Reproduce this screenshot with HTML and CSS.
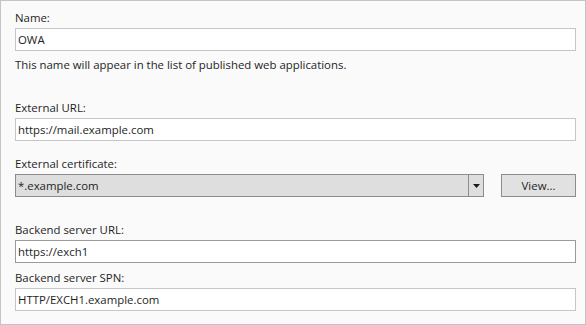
FILE: index.html
```html
<!DOCTYPE html>
<html lang="en">

<head>
  <meta charset="UTF-8" />
  <title>Publishing Settings</title>
  <link rel="stylesheet" href="styles.css">
</head>

<body>
  <div class="panel">
    <div class="field">
      <label class="label">Name:</label>
      <div class="box">OWA</div>
      <p class="hint">This name will appear in the list of published web applications.</p>
    </div>

    <div class="field url">
      <label class="label">External URL:</label>
      <div class="box">https://mail.example.com</div>
    </div>

    <div class="field cert">
      <label class="label">External certificate:</label>
      <div class="row">
        <div class="combo">
          <span class="combo-text">*.example.com</span>
          <span class="combo-arrow">
            <svg width="7" height="4" viewBox="0 0 7 4"><path d="M0 0h7L3.5 4z" fill="#1a1a1a"/></svg>
          </span>
        </div>
        <button class="btn">View...</button>
      </div>
    </div>

    <div class="field backend">
      <label class="label">Backend server URL:</label>
      <div class="box focus">https://exch1</div>
    </div>

    <div class="field spn">
      <label class="label">Backend server SPN:</label>
      <div class="box">HTTP/EXCH1.example.com</div>
    </div>
  </div>
</body>

</html>
```

FILE: styles.css
```css
*,
::before,
::after {
  box-sizing: border-box;
}

body {
  margin: 0;
  background: #fafafa;
  font-family: "Open Sans", "Noto Sans", sans-serif;
  font-size: 11.4px;
  color: #1e1e1e;
}

.panel {
  width: 586px;
  height: 325px;
  border: 1px solid #c4c4c4;
  background: #fafafa;
  padding: 9px 9px 0 14px;
}

.field {
  display: flex;
  flex-direction: column;
}

.label {
  display: block;
  line-height: 16px;
  height: 16px;
  margin-bottom: 2px;
}

.box {
  height: 23px;
  border: 1px solid #c6c6c6;
  background: #fff;
  line-height: 21px;
  padding-left: 2px;
  font-size: 11.4px;
}

.box.focus {
  border-color: #9a9a9a;
}

.hint {
  margin: 6px 0 0;
  line-height: 16px;
}

.url {
  margin-top: 27px;
}

.cert {
  margin-top: 15px;
}

.backend {
  margin-top: 25px;
}

.spn {
  margin-top: 7px;
}

/* combo + button */
.row {
  display: flex;
  gap: 17px;
}

.combo {
  width: 469px;
  height: 23px;
  display: flex;
  border: 1px solid #8c8c8c;
  background: #dedede;
}

.combo-text {
  flex: 1;
  line-height: 21px;
  padding-left: 2px;
  font-size: 11.4px;
}

.combo-arrow {
  width: 15px;
  border-left: 1px solid #8c8c8c;
  display: flex;
  align-items: center;
  justify-content: center;
}

.btn {
  width: 75px;
  height: 23px;
  border: 1px solid #8c8c8c;
  background: #e1e1e1;
  font-family: inherit;
  font-size: 11.4px;
  color: #1e1e1e;
  padding: 0;
}
```
